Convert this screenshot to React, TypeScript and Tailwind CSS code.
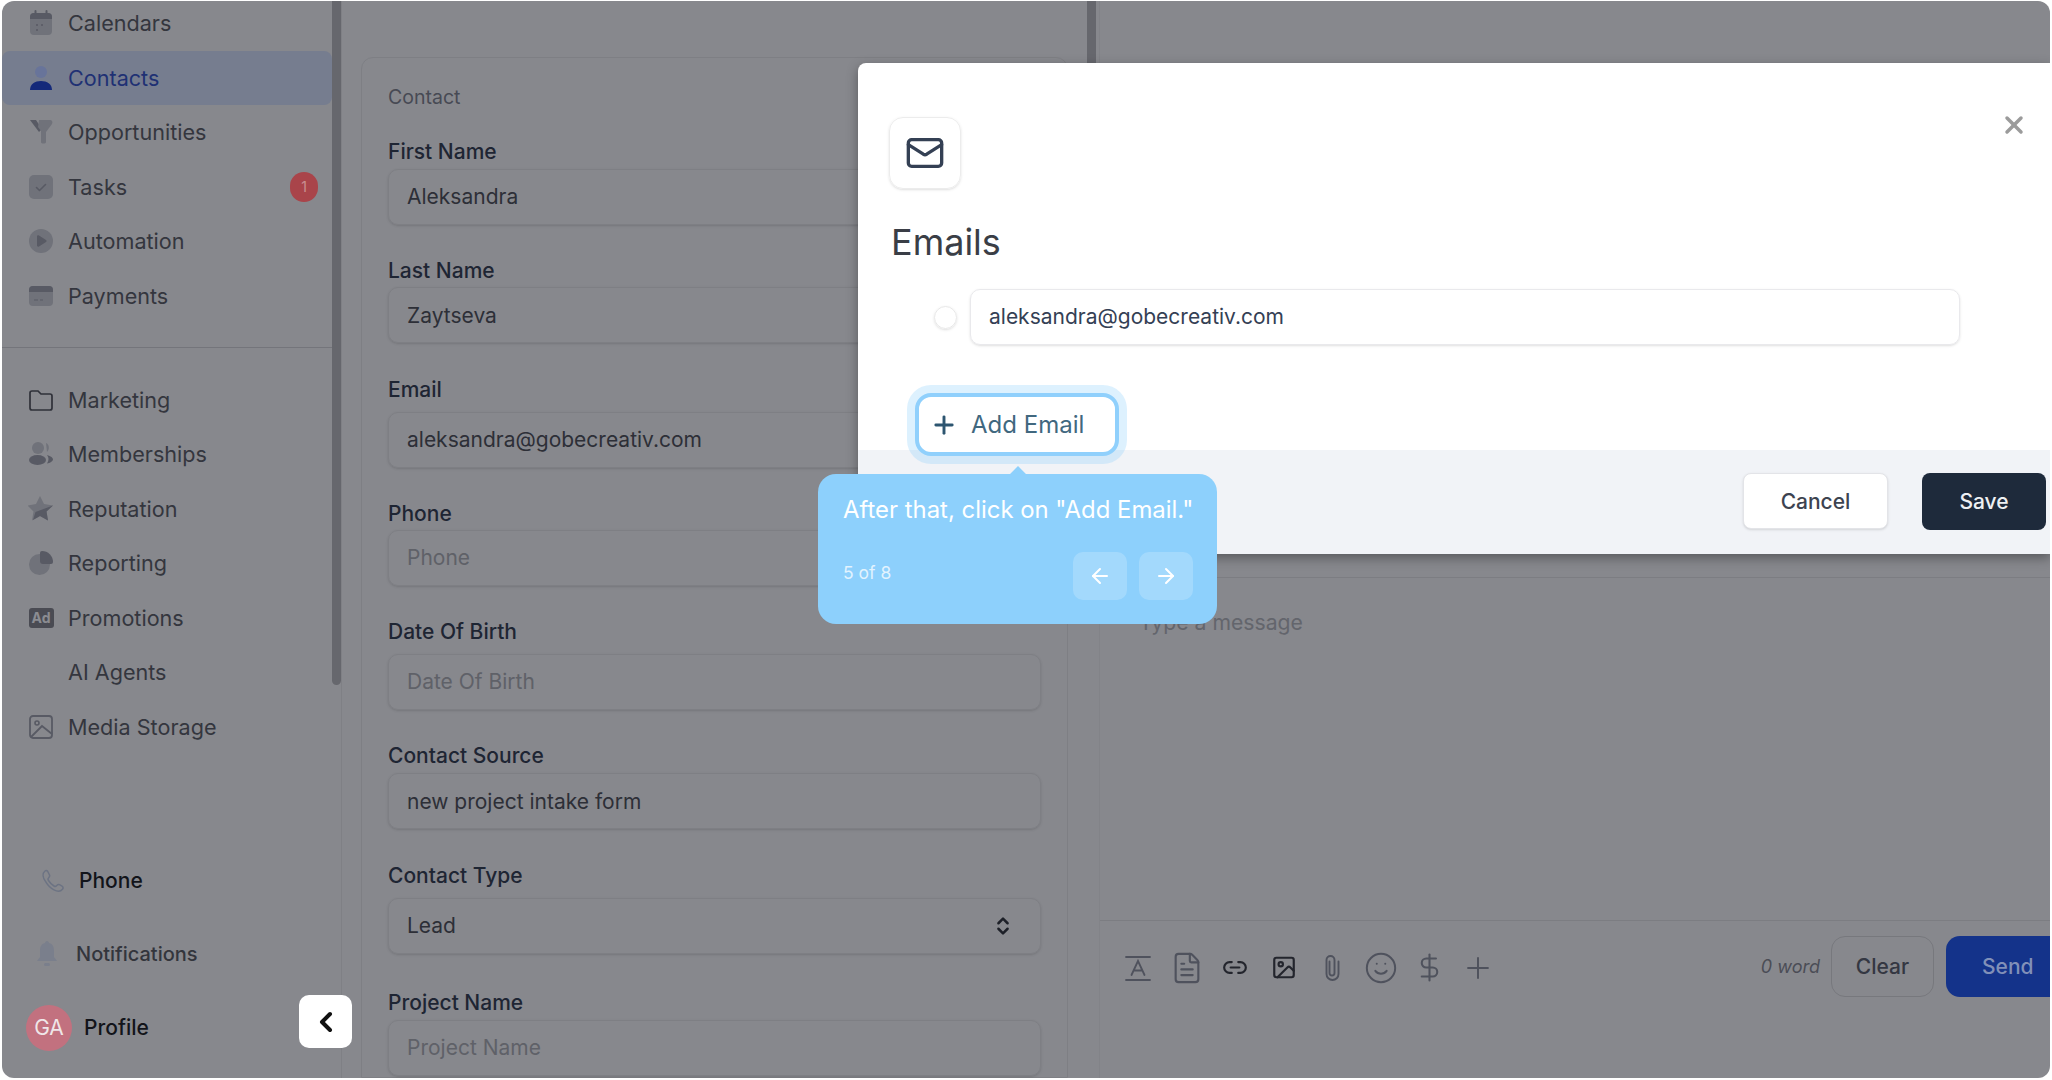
import { ArrowLeft, ArrowRight, ChevronLeft, ChevronsUpDown, DollarSign, FileText, Image, Link2, Mail, Plus, Smile, X } from "lucide-react";
import type { ReactNode } from "react";

const L = "#70727a";
const D = "#585a64";

function Box({ children }: { children: ReactNode }) {
  return (
    <svg width="26" height="26" viewBox="0 0 26 26" className="shrink-0">
      {children}
    </svg>
  );
}

const icons: Record<string, ReactNode> = {
  Calendars: (
    <Box>
      <rect x="2" y="3" width="22" height="22" rx="4" fill={L} />
      <path d="M2 9V7a4 4 0 0 1 4-4h14a4 4 0 0 1 4 4v2z" fill={D} />
      <rect x="6.5" y="0" width="2" height="5" rx="1" fill={D} />
      <rect x="17.5" y="0" width="2" height="5" rx="1" fill={D} />
      <circle cx="9" cy="15" r="1" fill={D} />
      <circle cx="14" cy="15" r="1" fill={D} />
      <circle cx="9" cy="20" r="1" fill={D} />
    </Box>
  ),
  Contacts: (
    <Box>
      <circle cx="13" cy="7" r="6" fill="#68749a" />
      <path d="M2 25c0-6 5-9 11-9s11 3 11 9z" fill="#14297a" />
    </Box>
  ),
  Opportunities: (
    <Box>
      <path d="M2 1h6l6 9-3 3z" fill={D} />
      <path d="M11 1h11c2 0 3 2 2 4l-6 8v10c0 2-5 2-5 0V12l-3-4z" fill={L} />
    </Box>
  ),
  Tasks: (
    <Box>
      <rect x="1" y="1" width="24" height="24" rx="5" fill={L} />
      <path d="M8.5 13.5l3 3 6-6" fill="none" stroke={D} strokeWidth="1.6" strokeLinecap="round" strokeLinejoin="round" />
    </Box>
  ),
  Automation: (
    <Box>
      <circle cx="13" cy="13" r="12" fill={L} />
      <path d="M9 8.5c0-1 1-1.5 2-1l7 4.5c.8.5.8 1.5 0 2l-7 4.5c-1 .5-2 0-2-1z" fill={D} />
    </Box>
  ),
  Payments: (
    <Box>
      <rect x="1" y="3" width="24" height="20" rx="4" fill={L} />
      <path d="M1 9V7a4 4 0 0 1 4-4h16a4 4 0 0 1 4 4v2z" fill={D} />
      <path d="M6 17h4M12 17h3" stroke={D} strokeWidth="1.2" />
    </Box>
  ),
  Marketing: (
    <Box>
      <path d="M2 6a2 2 0 0 1 2-2h6l3 3h9a2 2 0 0 1 2 2v12a2 2 0 0 1-2 2H4a2 2 0 0 1-2-2z" fill="none" stroke="#2f3139" strokeWidth="1.7" />
    </Box>
  ),
  Memberships: (
    <Box>
      <circle cx="10" cy="7" r="6" fill={L} />
      <path d="M18 2c3 1 4 6 1 9z" fill={L} />
      <ellipse cx="9.5" cy="19" rx="8.5" ry="5" fill={D} />
      <path d="M19 14c4 1 6 3 6 4.5s-3 3.5-6 4c2-3 2-6 0-8.5z" fill={D} />
    </Box>
  ),
  Reputation: (
    <Box>
      <path d="M12 0l4 8 9 1.500-6.500 6 1.500 9-8-4.500-8 4.500 1.500-9-6-6 8.500-1.500z" fill={L} />
      <path d="M25 9.500l-6.500 6 1.500 9-8-4.500-7 4 2.500-8z" fill={D} />
    </Box>
  ),
  Reporting: (
    <Box>
      <circle cx="11.5" cy="14.5" r="10.5" fill={L} />
      <path d="M14 1a11 11 0 0 1 11 11 2 2 0 0 1-2 2h-8a3 3 0 0 1-3-3V3a2 2 0 0 1 2-2z" fill={D} />
    </Box>
  ),
  "Media Storage": (
    <Box>
      <rect x="2" y="2" width="22" height="22" rx="3" fill="none" stroke={D} strokeWidth="1.8" />
      <circle cx="9" cy="9" r="2" fill="none" stroke={D} strokeWidth="1.6" />
      <path d="M3 23l11-11 10 8" fill="none" stroke={D} strokeWidth="1.8" />
    </Box>
  ),
};

const topNav = ["Calendars", "Contacts", "Opportunities", "Tasks", "Automation", "Payments"];
const lowerNav = ["Marketing", "Memberships", "Reputation", "Reporting", "Promotions", "AI Agents", "Media Storage"];

function NavRow({ name }: { name: string }) {
  const active = name === "Contacts";
  return (
    <div className={`flex h-[54.5px] items-center gap-[14px] pl-[26px] pr-[14px] rounded-lg text-[21.6px] ${active ? "bg-[#767d8f] text-[#1f3174]" : "text-[#34363e]"}`}>
      <span className="flex w-[26px] justify-center">
        {name === "Promotions" ? (
          <span className="flex h-[20px] w-[25px] items-center justify-center rounded-[3px] bg-[#4a4b53] text-[14px] font-bold text-[#8b8c91]">Ad</span>
        ) : (
          icons[name]
        )}
      </span>
      <span className="flex-1 -translate-y-[0.5px]">{name}</span>
      {name === "Tasks" && (
        <span className="flex h-[30px] w-[28px] items-center justify-center rounded-full bg-[#a9444a] text-[14px] text-[#c98f92]">1</span>
      )}
    </div>
  );
}

function Sidebar() {
  return (
    <aside className="flex h-full w-[340px] shrink-0 border-r border-[#7f8085]">
      <div className="flex w-[330px] flex-col">
        <div className="-mt-[5px]">
          {topNav.map((n) => (
            <NavRow key={n} name={n} />
          ))}
        </div>
        <div className="mb-[24.5px] mt-[24px] h-px bg-[#74757b]" />
        {lowerNav.map((n) => (
          <NavRow key={n} name={n} />
        ))}
        <div className="mt-auto pb-[13px]">
          <div className="flex h-[72px] items-center gap-[15px] pl-[38px] text-[21px] font-medium text-[#12141a]">
            <svg width="24" height="24" viewBox="0 0 24 24" fill="none" stroke="#6c7383" strokeWidth="1.5">
              <path d="M5 2c1.500-1 2.500 0 3 1l1.500 3c.5 1 0 2-1 3-.8.7-.6 1.500 0 2.500 1.500 2.500 3 4 5.500 5.500 1 .6 1.800.5 2.500-.3 1-1 2-1.500 3-1l2.500 1.500c1 .6 1.500 1.800.5 3-2 2.500-5 2.500-8.500.7-3-1.600-6.500-5-8.500-8.500C3 9 2 4.500 5 2z" />
            </svg>
            Phone
          </div>
          <div className="flex h-[74px] items-center gap-[18px] pl-[34px] text-[20px] font-medium text-[#33353c]">
            <svg width="22" height="26" viewBox="0 0 22 26" fill="#7a7f8c">
              <path d="M11 0c1 0 2 1 2 2 4 1 5 4 5 8v6l3 4H1l3-4v-6c0-4 1-7 5-8 0-1 1-2 2-2z" />
              <rect x="8" y="22" width="6" height="3" rx="1.5" />
            </svg>
            Notifications
          </div>
          <div className="flex h-[74px] items-center gap-[12px] pl-[24px] text-[21px] font-medium text-[#12141a]">
            <span className="flex h-[46px] w-[46px] items-center justify-center rounded-full bg-[#c2717f] text-[21px] font-normal text-[#efe6e8]">GA</span>
            Profile
          </div>
        </div>
      </div>
      <div className="w-[9px]">
        <div className="h-[684px] rounded-b-md bg-[#66676d]" />
      </div>
    </aside>
  );
}

type FieldProps = { label: string; value?: string; placeholder?: string; gap: string; select?: boolean };

const fields: FieldProps[] = [
  { label: "First Name", value: "Aleksandra", gap: "gap-[5px]" },
  { label: "Last Name", value: "Zaytseva", gap: "gap-[4px]" },
  { label: "Email", value: "aleksandra@gobecreativ.com", gap: "gap-[10px]" },
  { label: "Phone", placeholder: "Phone", gap: "gap-[4px]" },
  { label: "Date Of Birth", placeholder: "Date Of Birth", gap: "gap-[10px]" },
  { label: "Contact Source", value: "new project intake form", gap: "gap-[5px]" },
  { label: "Contact Type", value: "Lead", gap: "gap-[10px]", select: true },
  { label: "Project Name", placeholder: "Project Name", gap: "mt-[3px] gap-[5px]" },
];

function Field({ label, value, placeholder, gap, select }: FieldProps) {
  return (
    <div className={`flex flex-col ${gap}`}>
      <label className="h-[24px] text-[21px] leading-[24px] font-medium text-[#1e2533]">{label}</label>
      <div className="flex h-[56px] items-center justify-between rounded-[10px] border border-[#7e7f84] pl-[18px] pr-[26px] text-[21px] shadow-sm">
        <span className={value ? "text-[#2d2f37]" : "text-[#5f6168]"}>{value ?? placeholder}</span>
        {select && <ChevronsUpDown size={22} strokeWidth={2.7} className="text-[#1d2028]" />}
      </div>
    </div>
  );
}

function ContactColumn() {
  return (
    <div className="flex h-full w-[757px] shrink-0 overflow-hidden">
      <div className="ml-[19px] mt-[56px] w-[707px] rounded-t-xl border border-[#7e7f84] px-[26px] pt-[27px]">
        <p className="h-[24px] text-[19.5px] leading-[24px] text-[#474a54]">Contact</p>
        <div className="mt-[31px] flex flex-col gap-[34.3px]">
          {fields.map((f) => (
            <Field key={f.label} {...f} />
          ))}
        </div>
      </div>
      <div className="ml-[19px] w-[9px]">
        <div className="h-[500px] rounded-b-md bg-[#66676d]" />
      </div>
    </div>
  );
}

function ToolbarIcon({ children }: { children: ReactNode }) {
  return <span className="flex w-[26px] justify-center">{children}</span>;
}

function ConversationPanel() {
  return (
    <div className="flex h-full flex-1 flex-col border-l border-[#828388]">
      <div className="h-[577px] border-b border-[#7c7d82]" />
      <div className="flex-1 pl-[39px] pt-[31px] text-[21.2px] leading-[26px] text-[#63656c]">Type a message</div>
      <div className="flex h-[158px] items-start border-t border-[#7c7d82] pt-[15px]">
        <div className="flex h-[63px] items-center gap-[22.5px] pl-[25px] text-[#4f525d]">
          <ToolbarIcon>
            <svg width="26" height="26" viewBox="0 0 26 26" fill="none" stroke="currentColor" strokeWidth="1.8" strokeLinecap="round">
              <path d="M1 2h24M1 25h24M6.5 20L13 6l6.5 14M9 15.5h8" />
            </svg>
          </ToolbarIcon>
          <ToolbarIcon><FileText size={34} strokeWidth={1.5} className="-mx-[4px] shrink-0" /></ToolbarIcon>
          <ToolbarIcon><Link2 size={27} strokeWidth={2} className="text-[#23252d]" /></ToolbarIcon>
          <ToolbarIcon><Image size={27} strokeWidth={2} className="text-[#23252d]" /></ToolbarIcon>
          <ToolbarIcon>
            <svg width="18" height="28" viewBox="0 0 18 28" fill="none" stroke="currentColor" strokeWidth="1.9" strokeLinecap="round">
              <path d="M6.5 7.5V19a2.5 2.5 0 0 0 5 0V6a4 4 0 0 0-8 0v14a6 6 0 0 0 12 0V7.500" />
            </svg>
          </ToolbarIcon>
          <ToolbarIcon><Smile size={34} strokeWidth={1.4} className="-mx-[4px] shrink-0" /></ToolbarIcon>
          <ToolbarIcon><DollarSign size={31} strokeWidth={1.6} className="-mx-[3px] shrink-0" /></ToolbarIcon>
          <ToolbarIcon><Plus size={34} strokeWidth={1.4} className="-mx-[4px] shrink-0" /></ToolbarIcon>
        </div>
        <div className="ml-auto flex items-center gap-[11px]">
          <span className="text-[18px] italic text-[#4b4d56]">0 word</span>
          <button className="h-[61px] w-[103px] rounded-[14px] border border-[#77787d] text-[21px] font-medium text-[#343742]">Clear</button>
          <button className="ml-[1px] h-[61px] w-[104px] rounded-l-[14px] bg-[#14338a] pl-[36px] text-left text-[21px] font-medium text-[#8190b8]">Send</button>
        </div>
      </div>
    </div>
  );
}

function EmailsModal() {
  return (
    <div className="absolute left-[856px] right-0 top-[62px] flex h-[491px] flex-col rounded-tl-lg bg-white shadow-[0_4px_12px_rgba(0,0,0,0.35)]">
      <button className="absolute right-[22px] top-[48px] text-[#9b9b9b]">
        <X size={28} strokeWidth={3} />
      </button>
      <div className="relative z-10 h-[387px] pl-[31px] pt-[54px]">
        <div className="flex h-[72px] w-[72px] items-center justify-center rounded-[14px] border border-[#ececec] shadow-sm">
          <Mail size={40} strokeWidth={2} className="text-[#344054]" />
        </div>
        <h2 className="ml-[2px] mt-[31px] h-[44px] text-[36px] leading-[44px] text-[#3a3e46]">Emails</h2>
        <div className="ml-[45px] mt-[25px] flex items-center gap-[13px]">
          <span className="h-[23px] w-[23px] rounded-full border border-[#e8e8e8] shadow-sm" />
          <div className="flex h-[56px] w-[990px] items-center rounded-[10px] border border-[#e9e9ec] pl-[18px] text-[21px] text-[#344054] shadow-sm">
            aleksandra@gobecreativ.com
          </div>
        </div>
        <button className="ml-[26px] mt-[48px] flex h-[63px] w-[204px] items-center gap-[13px] rounded-[16px] border-[4px] border-[#90d0fc] bg-white pl-[11px] text-[24px] text-[#41687f] shadow-[0_0_0_8px_rgba(144,208,252,0.3)]">
          <Plus size={28} strokeWidth={2.5} className="text-[#2d5570]" />
          Add Email
        </button>
      </div>
      <div className="flex flex-1 items-start justify-end bg-[#f1f3f7] pr-[4px] pt-[23px]">
        <button className="h-[56px] w-[145px] rounded-[8px] border border-[#e3e4e8] bg-white pt-[1px] text-[21px] font-medium text-[#3d4350] shadow-sm">Cancel</button>
        <button className="ml-[34px] h-[57px] w-[124px] rounded-[8px] bg-[#1e2a3b] pt-[1px] text-[21px] font-medium text-[#eef0f3]">Save</button>
      </div>
      <div className="absolute left-[-40px] top-[411px] z-20 flex h-[150px] w-[399px] flex-col rounded-[18px] bg-[#8dd0fc] pl-[25px] pr-[24px] pt-[20px] text-white">
        <span className="absolute left-[193px] top-[-5px] h-[14px] w-[14px] rotate-45 bg-[#8dd0fc]" />
        <p className="whitespace-nowrap text-[23.9px] leading-[32px]">After that, click on "Add Email."</p>
        <div className="mt-[26px] flex items-center justify-between">
          <span className="-mt-[6px] text-[17.5px] text-white/75">5 of 8</span>
          <div className="flex gap-[12px]">
            <button className="flex h-[48px] w-[54px] items-center justify-center rounded-[10px] bg-white/20"><ArrowLeft size={24} strokeWidth={2} /></button>
            <button className="flex h-[48px] w-[54px] items-center justify-center rounded-[10px] bg-white/20"><ArrowRight size={24} strokeWidth={2} /></button>
          </div>
        </div>
      </div>
    </div>
  );
}

export default function App() {
  return (
    <div className="h-screen w-full overflow-hidden bg-white px-[2px] py-px" style={{ fontFamily: "Inter, sans-serif" }}>
      <div className="relative flex h-[1077px] overflow-hidden rounded-xl bg-[#87888d]">
        <Sidebar />
        <ContactColumn />
        <ConversationPanel />
        <EmailsModal />
        <button className="absolute left-[297px] top-[994px] flex h-[53px] w-[53px] items-center justify-center rounded-[10px] bg-white">
          <ChevronLeft size={32} strokeWidth={3} className="text-[#111]" />
        </button>
      </div>
    </div>
  );
}
